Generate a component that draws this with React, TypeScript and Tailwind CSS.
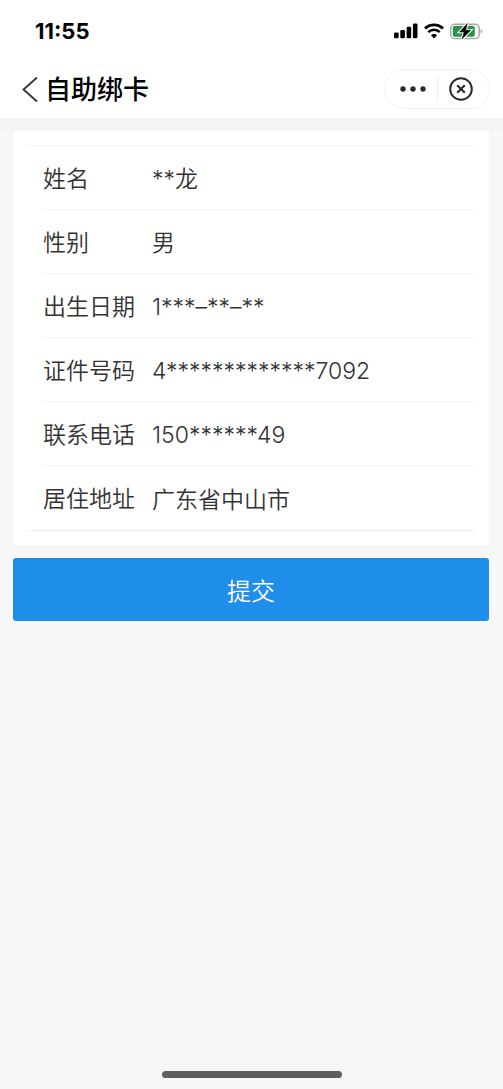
interface Field {
  label: string
  value: string
}

const fields: Field[] = [
  { label: "姓名", value: "**龙" },
  { label: "性别", value: "男" },
  { label: "出生日期", value: "1***–**–**" },
  { label: "证件号码", value: "4*************7092" },
  { label: "联系电话", value: "150******49" },
  { label: "居住地址", value: "广东省中山市" },
]

function SignalIcon() {
  return (
    <svg width="24" height="16" viewBox="0 0 24 16" fill="#000" aria-hidden="true">
      <rect x="0" y="9.4" width="4.6" height="5.8" rx="1.3" />
      <rect x="6.3" y="7" width="4.6" height="8.2" rx="1.3" />
      <rect x="12.6" y="3.8" width="4.6" height="11.4" rx="1.3" />
      <rect x="18.9" y="0.4" width="4.6" height="14.8" rx="1.3" />
    </svg>
  )
}

function WifiIcon() {
  return (
    <svg width="20" height="16" viewBox="0 0 20 16" fill="none" stroke="#000" aria-hidden="true">
      <path d="M1 5.6C6 .6 14 .6 19 5.6" strokeWidth="2.8" />
      <path d="M4.3 9.2c3.2-3.2 8.2-3.2 11.4 0" strokeWidth="2.6" />
      <path d="M10 15.4 6.9 12.3c1.8-1.6 4.4-1.6 6.2 0z" fill="#000" stroke="none" />
    </svg>
  )
}

function BatteryIcon() {
  const bolt = "M17.2.6 9.6 9h4.6l-2 6.8 8.4-8.6h-5z"
  return (
    <svg width="33" height="17" viewBox="0 0 33 17" fill="none" aria-hidden="true">
      <rect x="0.8" y="1.2" width="28.4" height="14.4" rx="4.2" stroke="#a8a8a8" strokeWidth="1.5" />
      <path d="M30.6 6v4.6c1-.4 1.7-1.2 1.7-2.3S31.6 6.4 30.6 6z" fill="#a8a8a8" />
      <rect x="2.8" y="3.1" width="22" height="10.6" rx="2" fill="#2b9348" />
      <path d={bolt} fill="#fff" stroke="#fff" strokeWidth="2.6" />
      <path d={bolt} fill="#000" stroke="#000" strokeWidth="0.6" />
    </svg>
  )
}

function StatusBar() {
  return (
    <div className="flex h-[60px] items-center justify-between pt-0.5 pr-5 pl-[35px]">
      <span className="text-[22px] leading-6 font-bold text-black">11:55</span>
      <div className="flex items-center gap-1.5">
        <SignalIcon />
        <WifiIcon />
        <BatteryIcon />
      </div>
    </div>
  )
}

function NavBar() {
  return (
    <header className="flex h-[58px] items-center justify-between pr-[13px] pl-[21px]">
      <div className="flex items-center gap-[7px]">
        <button type="button" aria-label="返回">
          <svg width="17" height="27" viewBox="0 0 17 27" fill="none" stroke="#333" strokeWidth="1.8">
            <path d="M16 1.5 2.500 13.500l13.500 12" />
          </svg>
        </button>
        <h1 className="pt-0.5 text-[26px] leading-8 font-medium text-black">自助绑卡</h1>
      </div>

      {/* Capsule menu */}
      <div className="flex h-10 w-[106px] items-center rounded-full border border-[#f2f2f2]">
        <button type="button" aria-label="更多" className="flex flex-1 justify-center pl-1">
          <svg width="26" height="6" viewBox="0 0 26 6" fill="#2b2b2b">
            <circle cx="3" cy="3" r="2.7" />
            <circle cx="13" cy="3" r="2.7" />
            <circle cx="23" cy="3" r="2.7" />
          </svg>
        </button>
        <span className="h-6 w-px bg-[#ededed]" />
        <button type="button" aria-label="关闭" className="flex flex-1 justify-center pr-1">
          <svg width="24" height="24" viewBox="0 0 24 24" fill="none" stroke="#2b2b2b">
            <circle cx="12" cy="12" r="10.8" strokeWidth="2" />
            <path d="m8.2 8.2 7.6 7.6M15.8 8.2l-7.6 7.6" strokeWidth="2.2" />
          </svg>
        </button>
      </div>
    </header>
  )
}

function FieldRow({ label, value, last }: Field & { last: boolean }) {
  return (
    <div className={last ? "border-b border-[#eeeeee] pl-4" : "pl-4"}>
      <div
        className={
          last
            ? "flex h-16 items-center pt-0.5"
            : "flex h-16 items-center border-b border-[#f4f4f4] pt-0.5"
        }
      >
        <dt className="w-[109px] shrink-0">{label}</dt>
        <dd className="pt-px">{value}</dd>
      </div>
    </div>
  )
}

export default function App() {
  return (
    <div className="flex min-h-screen flex-col bg-[#f7f7f7] font-[Inter,'Noto_Sans_CJK_SC',sans-serif]">
      <div className="bg-white">
        <StatusBar />
        <NavBar />
      </div>
      <div className="h-[13px] bg-[#f4f4f4]" />

      <main className="flex flex-1 flex-col gap-[13px] pr-3.5 pl-[13px]">
        <section className="bg-white px-3.5 py-3.5">
          <dl className="border-t border-[#f4f4f4] text-[23px] leading-8 font-[350] text-[#333]">
            {fields.map((field, i) => (
              <FieldRow key={field.label} {...field} last={i === fields.length - 1} />
            ))}
          </dl>
        </section>

        <button
          type="button"
          className="h-[63px] rounded-[3px] bg-[#1f8eea] pt-1 text-[24px] leading-8 font-[350] text-white"
        >
          提交
        </button>
      </main>

      {/* Home indicator */}
      <div className="flex justify-center pb-[11px]">
        <div className="h-[7px] w-[180px] rounded-full bg-[#5e5e5e]" />
      </div>
    </div>
  )
}
